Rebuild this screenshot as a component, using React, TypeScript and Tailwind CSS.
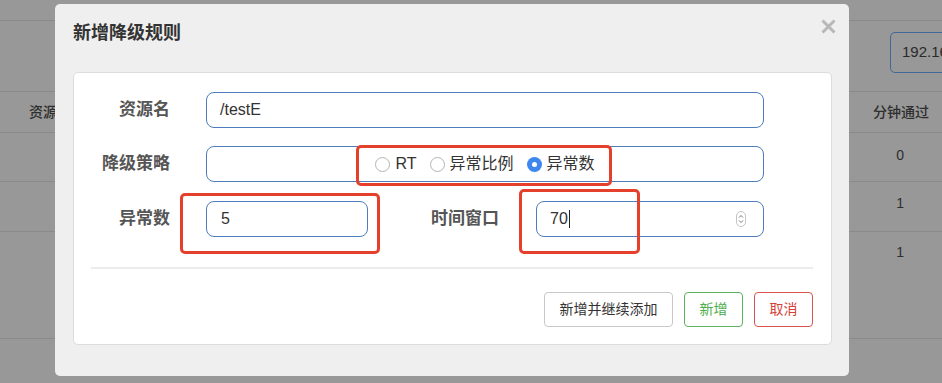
const font = "font-['Liberation_Sans','Noto_Sans_CJK_SC',sans-serif]";

const Radio = ({ label, checked }: { label: string; checked?: boolean }) => (
    <label className="flex items-center gap-[5px]">
        {checked ? (
            <span className="flex size-[15px] items-center justify-center rounded-full bg-[#3e87ee]">
                <span className="size-[5px] rounded-full bg-white" />
            </span>
        ) : (
            <span className="size-[15px] rounded-full border border-[#b3b3b3] bg-white" />
        )}
        <span className="text-[16px] leading-[20px] text-[#333]">{label}</span>
    </label>
);

const Spinner = () => (
    <svg width="10" height="16" viewBox="0 0 10 16" aria-hidden>
        <rect x="0.5" y="0.5" width="9" height="15" rx="4.5" fill="#fff" stroke="#c4c4c4" />
        <path d="M3 6.5 L5 4.5 L7 6.5" fill="none" stroke="#777" strokeWidth="1" />
        <path d="M3 9.5 L5 11.5 L7 9.5" fill="none" stroke="#777" strokeWidth="1" />
    </svg>
);

export default function App() {
    return (
        <div className={`relative h-[383px] w-[942px] overflow-hidden bg-[#989898] ${font}`}>
            {/* page behind the overlay */}
            <div className="flex flex-col">
                <div className="h-[21px] border-b border-[#8a8a8a]" />
                <div className="flex h-[71px] justify-end border-b border-[#8a8a8a] pt-[11px]">
                    <div className="-mr-[40px] flex h-[41px] w-[92px] items-center rounded-[5px] border border-[#41679a] pl-[11px] text-[15px] text-[#2a2a2a]">
                        192.168
                    </div>
                </div>
                <div className="flex h-[41px] items-center justify-between border-b border-[#8a8a8a] pl-[29px] pr-[13px] text-[14px] font-medium text-[#2e2e2e]">
                    <span>资源名</span>
                    <span>分钟通过</span>
                </div>
                <div className="flex h-[49px] justify-end border-b border-[#8a8a8a] pr-[38px] pt-[12px] text-[14px] text-[#2e2e2e]">0</div>
                <div className="flex h-[50px] justify-end border-b border-[#8a8a8a] pr-[38px] pt-[11px] text-[14px] text-[#2e2e2e]">1</div>
                <div className="flex h-[107px] justify-end border-b border-[#8a8a8a] pr-[38px] pt-[10px] text-[14px] text-[#2e2e2e]">1</div>
            </div>

            {/* modal */}
            <div className="absolute left-[55px] top-[4px] flex h-[372px] w-[794px] flex-col rounded-[5px] bg-[#efefef]">
                <div className="flex h-[68px] items-start justify-between pl-[18px] pr-[13px] pt-[18px]">
                    <h2 className="text-[18px] font-bold leading-[22px] text-[#333]">新增降级规则</h2>
                    <svg width="15" height="15" viewBox="0 0 15 15" className="-mt-[3px]" aria-hidden>
                        <path d="M1.5 1.5 L13.5 13.5 M13.5 1.5 L1.5 13.5" stroke="#b8b8b8" strokeWidth="3" />
                    </svg>
                </div>

                <div className="ml-[18px] mr-[17px] flex flex-col rounded-[5px] border border-[#dcdcdc] bg-white pb-[17px] pt-[19px]">
                    <div className="flex h-[36px] items-center">
                        <span className="w-[96px] text-right text-[17px] font-semibold text-[#555]">资源名</span>
                        <div className="ml-[36px] flex h-[36px] w-[558px] items-center rounded-[8px] border border-[#4d7dbd] pl-[13px] text-[16px] text-[#333]">
                            /testE
                        </div>
                    </div>

                    <div className="mt-[18px] flex h-[36px] items-center">
                        <span className="w-[96px] text-right text-[17px] font-semibold text-[#555]">降级策略</span>
                        <div className="ml-[36px] flex h-[36px] w-[558px] items-center justify-center gap-[13px] rounded-[8px] border border-[#4d7dbd]">
                            <Radio label="RT" />
                            <Radio label="异常比例" />
                            <Radio label="异常数" checked />
                        </div>
                    </div>

                    <div className="mt-[19px] flex h-[36px] items-center">
                        <span className="w-[96px] text-right text-[17px] font-semibold text-[#555]">异常数</span>
                        <div className="ml-[36px] flex h-[36px] w-[162px] items-center rounded-[8px] border border-[#4d7dbd] pl-[14px] text-[16px] text-[#333]">
                            5
                        </div>
                        <span className="w-[131px] text-right text-[17px] font-semibold text-[#555]">时间窗口</span>
                        <div className="ml-[37px] flex h-[36px] w-[228px] items-center justify-between rounded-[8px] border border-[#4d7dbd] pl-[13px] pr-[17px] text-[16px] text-[#333]">
                            <span className="flex items-center">
                                70
                                <span className="ml-[1px] h-[18px] w-px bg-[#222]" />
                            </span>
                            <Spinner />
                        </div>
                    </div>

                    <div className="ml-[17px] mr-[18px] mt-[30px] h-[2px] bg-[#ececec]" />

                    <div className="mt-[23px] flex justify-end gap-[11px] pr-[18px] text-[14px]">
                        <button className="h-[35px] w-[129px] rounded-[4px] border border-[#c8c8c8] bg-white text-[#333]">
                            新增并继续添加
                        </button>
                        <button className="h-[35px] w-[59px] rounded-[4px] border border-[#5cb25c] bg-white text-[#4cae4c]">
                            新增
                        </button>
                        <button className="h-[35px] w-[59px] rounded-[4px] border border-[#d9534f] bg-white text-[#d43f3a]">
                            取消
                        </button>
                    </div>
                </div>
            </div>

            {/* red annotation boxes */}
            <div className="absolute left-[356px] top-[145px] h-[41px] w-[256px] rounded-[5px] border-[3px] border-[#e5402c]" />
            <div className="absolute left-[180px] top-[193px] h-[61px] w-[200px] rounded-[5px] border-[3px] border-[#e5402c]" />
            <div className="absolute left-[519px] top-[189px] h-[65px] w-[121px] rounded-[5px] border-[3px] border-[#e5402c]" />
        </div>
    );
}
